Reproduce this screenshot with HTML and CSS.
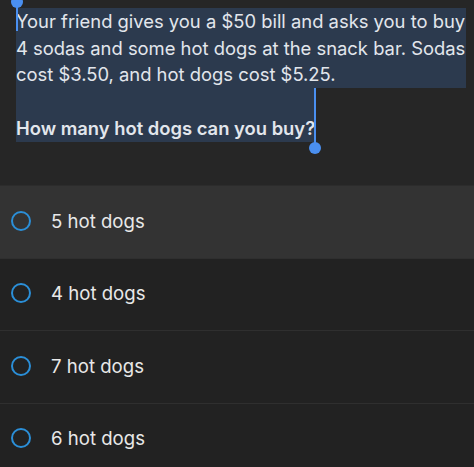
FILE: index.html
```html
<!DOCTYPE html>
<html lang="en">
<head>
    <meta charset="UTF-8">
    <meta name="viewport" content="width=device-width, initial-scale=1.0">
    <title>Question</title>
    <link rel="stylesheet" href="styles.css">
</head>
<body>
    <div class="question">
        <div class="sel sel-full">
            <div class="line">Your friend gives you a $50 bill and asks you to buy</div>
            <div class="line">4 sodas and some hot dogs at the snack bar. Sodas</div>
            <div class="line">cost $3.50, and hot dogs cost $5.25.</div>
        </div>
        <div class="sel sel-part">
            <div class="line">&nbsp;</div>
            <div class="line ask">How many hot dogs can you buy?</div>
        </div>
        <div class="caret caret-start"><span class="knob"></span></div>
        <div class="caret caret-end"><span class="knob"></span></div>
    </div>

    <ul class="answers">
        <li class="answer is-hover"><span class="radio"></span>5 hot dogs</li>
        <li class="answer"><span class="radio"></span>4 hot dogs</li>
        <li class="answer"><span class="radio"></span>7 hot dogs</li>
        <li class="answer"><span class="radio"></span>6 hot dogs</li>
    </ul>
</body>
</html>
```
FILE: styles.css
```css
body {
    background-color: #222222;
    font-family: 'Inter', 'Liberation Sans', sans-serif;
    color: #e4e4e4;
    margin: 0;
    padding: 0;
    overflow: hidden;
}
.question {
    position: relative;
    background-color: #262626;
    height: 185px;
    padding: 8px 0 0 16px;
    box-sizing: border-box;
}
.sel {
    background-color: #2c3a4e;
    color: #e2e6ec;
    font-size: 18.4px;
    line-height: 26.7px;
}
.sel-full {
    width: 450px;
}
.sel-part {
    width: 299px;
}
.line {
    white-space: nowrap;
}
.ask {
    font-weight: 600;
}
.caret {
    position: absolute;
    width: 2px;
    background-color: #4a8ff0;
}
.caret-start {
    left: 16px;
    top: 0;
    height: 31px;
}
.caret-end {
    left: 314px;
    top: 88px;
    height: 58px;
}
.knob {
    position: absolute;
    width: 12px;
    height: 12px;
    border-radius: 50%;
    background-color: #4a8ff0;
    left: -5px;
}
.caret-start .knob {
    top: -4px;
}
.caret-end .knob {
    bottom: -8px;
}
.answers {
    list-style: none;
    margin: 0;
    padding: 0;
}
.answer {
    display: flex;
    align-items: center;
    height: 72.5px;
    padding-left: 11px;
    padding-bottom: 2px;
    box-sizing: border-box;
    font-size: 18.6px;
    color: #e8e8e8;
    border-top: 1px solid #2f2f2f;
}
.answer.is-hover {
    background-color: #333333;
    border-top: 1px solid #2c2c2c;
}
.radio {
    width: 16px;
    height: 16px;
    border: 2.5px solid #2b8fd8;
    border-radius: 50%;
    margin-right: 20px;
}
```
